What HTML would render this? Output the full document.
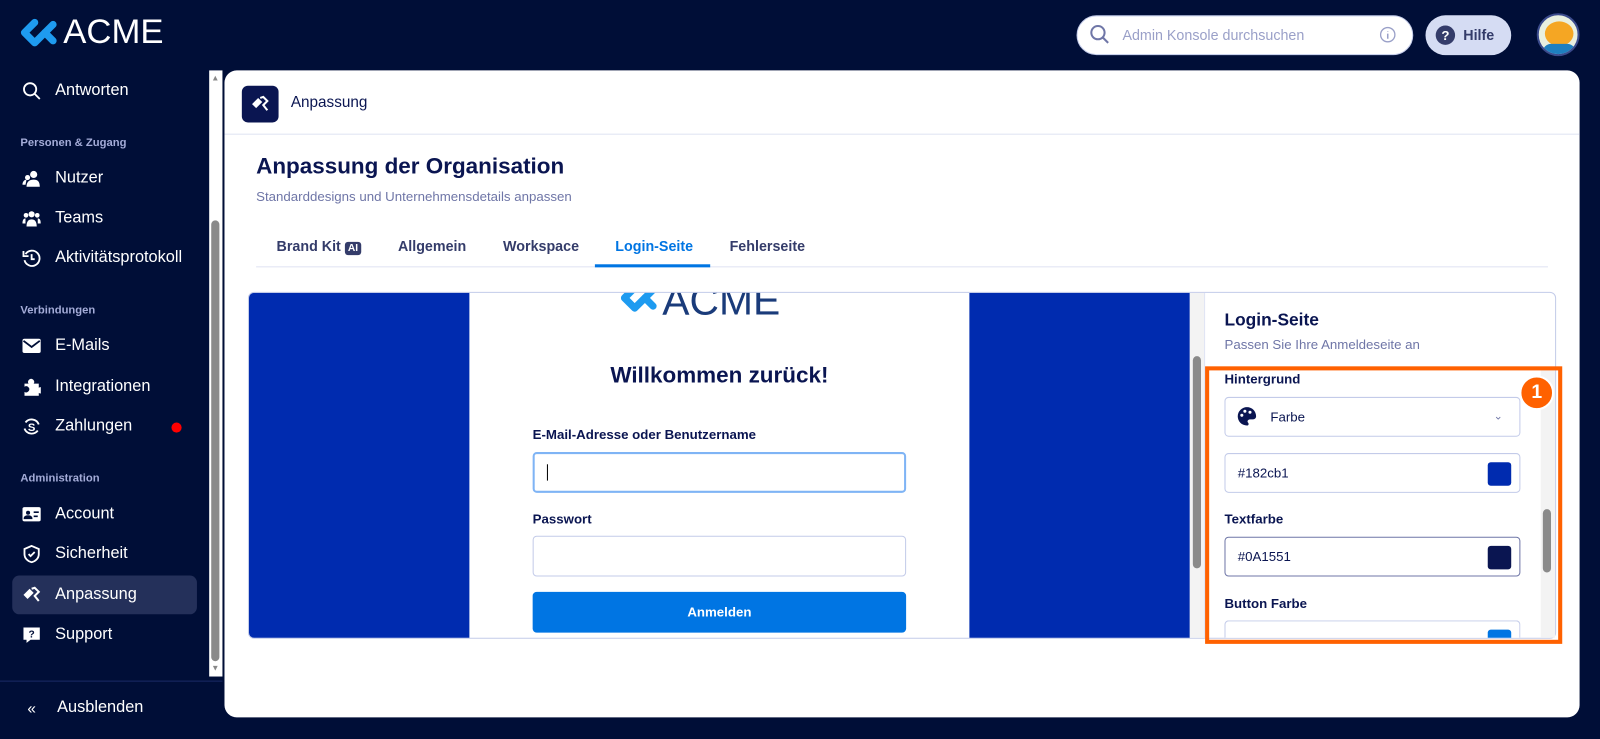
<!DOCTYPE html>
<html><head><meta charset="utf-8"><style>
*{box-sizing:border-box;margin:0;padding:0}
body{width:1600px;height:739px;background:#000e37;font-family:"Liberation Sans",sans-serif;position:relative;overflow:hidden;color:#0a1551}
#w{position:absolute;left:0;top:0;width:1568px;height:724px;transform:scale(1.0204);transform-origin:0 0}
.abs{position:absolute}
.nav{position:absolute;left:22px;color:#fff;font-size:16px;display:flex;align-items:center;gap:14px}
.nav svg{width:18px;height:18px}
.sec{position:absolute;left:20px;color:#a4acd8;font-size:11px;font-weight:bold}
.tab{position:absolute;top:233px;font-size:14px;font-weight:bold;color:#343c6a}
.lbl{position:absolute;left:1200px;font-size:13px;font-weight:bold;color:#0a1551}
.inp{position:absolute;left:1200px;width:290px;height:39px;border:1px solid #c3cbe9;border-radius:4px;background:#fff;font-size:13px;padding-left:12px;line-height:37px;color:#0a1551;overflow:hidden}
.sw{position:absolute;right:8px;top:8px;width:23px;height:23px;border-radius:3px}
</style></head><body><div id="w">
<svg class="abs" style="left:18px;top:16px" width="40" height="32" viewBox="0 0 40 32"><path d="M16 6 L6 16 L16 26 L26 16 L34 24" fill="none" stroke="#1e9bf0" stroke-width="7" stroke-linejoin="round" stroke-linecap="round"/><path d="M26 16 L34 8" stroke="#1e9bf0" stroke-width="7" stroke-linecap="round"/></svg>
<div class="abs" style="left:62px;top:12px;color:#fff;font-size:34px">ACME</div>
<div class="abs" style="left:1055px;top:15px;width:330px;height:39px;background:#fff;border-radius:20px;border:1px solid #c3cbe9"></div>
<svg class="abs" style="left:1068px;top:24px" width="20" height="20" viewBox="0 0 20 20"><circle cx="8" cy="8" r="6.5" fill="none" stroke="#6f76a7" stroke-width="2"/><path d="M13 13l5 5" stroke="#6f76a7" stroke-width="2"/></svg>
<div class="abs" style="left:1100px;top:26px;font-size:14px;color:#9aa0c8">Admin Konsole durchsuchen</div>
<svg class="abs" style="left:1352px;top:26px" width="16" height="16" viewBox="0 0 16 16"><circle cx="8" cy="8" r="7" fill="none" stroke="#9aa0c8" stroke-width="1.3"/><path d="M8 7v5M8 4.5v.5" stroke="#9aa0c8" stroke-width="1.5"/></svg>
<div class="abs" style="left:1397px;top:15px;width:84px;height:39px;background:#d5dcf3;border-radius:20px"></div>
<div class="abs" style="left:1407px;top:25px;width:19px;height:19px;border-radius:50%;background:#343c6a;color:#fff;font-size:13px;font-weight:bold;text-align:center;line-height:19px">?</div>
<div class="abs" style="left:1434px;top:26px;font-size:14px;font-weight:bold;color:#343c6a">Hilfe</div>
<div class="abs" style="left:1506px;top:13px;width:42px;height:42px;border-radius:50%;background:#e8efe0;border:2px solid #3a4a8c;overflow:hidden"><div style="position:absolute;left:6px;top:6px;width:28px;height:24px;border-radius:50%;background:#f5a623"></div><div style="position:absolute;bottom:0;left:4px;width:32px;height:10px;background:#1e7fc0;border-radius:8px 8px 0 0"></div></div>
<div class="nav" style="top:80px"><svg viewBox="0 0 18 18"><circle cx="7.5" cy="7.5" r="6" fill="none" stroke="#fff" stroke-width="1.8"/><path d="M12 12l5 5" stroke="#fff" stroke-width="1.8"/></svg>Antworten</div>
<div class="sec" style="top:134px">Personen &amp; Zugang</div>
<div class="nav" style="top:166px"><svg viewBox="0 0 18 18"><circle cx="11" cy="5" r="3.5" fill="#fff"/><circle cx="5" cy="8" r="2.5" fill="#fff"/><path d="M4 17c0-5 3-7 7-7s6 2 6 7zM0 15c0-3 2-5 4-5l-1 5z" fill="#fff"/></svg>Nutzer</div>
<div class="nav" style="top:205px"><svg viewBox="0 0 18 18"><circle cx="9" cy="5" r="3" fill="#fff"/><circle cx="3.5" cy="6" r="2.3" fill="#fff"/><circle cx="14.5" cy="6" r="2.3" fill="#fff"/><path d="M4 17c0-5 2-7 5-7s5 2 5 7zM0 14c0-3 1-5 3-5v5zM18 14c0-3-1-5-3-5v5z" fill="#fff"/></svg>Teams</div>
<div class="nav" style="top:244px"><svg viewBox="0 0 18 18"><path d="M3 5A7.5 7.5 0 1 1 2 11" fill="none" stroke="#fff" stroke-width="1.8"/><path d="M1 2v5h5" fill="none" stroke="#fff" stroke-width="1.8"/><path d="M9 5v5h3" fill="none" stroke="#fff" stroke-width="1.8"/></svg>Aktivitätsprotokoll</div>
<div class="sec" style="top:298px">Verbindungen</div>
<div class="nav" style="top:330px"><svg viewBox="0 0 18 18"><rect x="0" y="2" width="18" height="14" rx="2" fill="#fff"/><path d="M1 4l8 6 8-6" fill="none" stroke="#000e37" stroke-width="1.8"/></svg>E-Mails</div>
<div class="nav" style="top:370px"><svg viewBox="0 0 18 18"><path d="M2 6h4a3 3 0 1 1 5 0h5v4a3 3 0 1 1 0 5v3H2v-4a3 3 0 1 0 0-5z" fill="#fff"/></svg>Integrationen</div>
<div class="nav" style="top:409px"><svg viewBox="0 0 18 18"><path d="M3 5A7.5 7.5 0 0 1 16 7M15 13A7.5 7.5 0 0 1 2 11" fill="none" stroke="#fff" stroke-width="1.8"/><text x="9" y="13.5" font-size="11" font-weight="bold" fill="#fff" text-anchor="middle" font-family="Liberation Sans">S</text></svg>Zahlungen</div>
<div class="abs" style="left:168px;top:414px;width:10px;height:10px;border-radius:50%;background:#f00"></div>
<div class="sec" style="top:463px">Administration</div>
<div class="nav" style="top:495px"><svg viewBox="0 0 18 18"><rect x="0" y="2" width="18" height="14" rx="2" fill="#fff"/><circle cx="5.5" cy="7.5" r="2" fill="#000e37"/><path d="M2 13c0-3 7-3 7 0z M11 7h5M11 11h4" stroke="#000e37" stroke-width="1.6" fill="#000e37"/></svg>Account</div>
<div class="nav" style="top:534px"><svg viewBox="0 0 18 18"><path d="M9 1l7 3v5c0 4-3 7-7 8-4-1-7-4-7-8V4z" fill="none" stroke="#fff" stroke-width="1.8"/><path d="M6 9l2 2 4-4" fill="none" stroke="#fff" stroke-width="1.8"/></svg>Sicherheit</div>
<div class="abs" style="left:12px;top:564px;width:181px;height:38px;background:#24305a;border-radius:7px"></div>
<div class="nav" style="top:574px"><svg viewBox="0 0 18 18"><path d="M1 9l6-6 4 4-6 6z" fill="#fff"/><path d="M9 3l3-1 4 4-4 4 4 5" fill="none" stroke="#fff" stroke-width="2"/></svg>Anpassung</div>
<div class="nav" style="top:613px"><svg viewBox="0 0 18 18"><path d="M1 2h16v12H8l-4 3v-3H1z" fill="#fff"/><text x="9" y="12" font-size="10" font-weight="bold" fill="#000e37" text-anchor="middle" font-family="Liberation Sans">?</text></svg>Support</div>
<div class="abs" style="left:0;top:667px;width:218px;height:1px;background:#1a2a66"></div>
<div class="nav" style="top:685px;gap:16px"><span style="width:18px;text-align:center;font-size:15px">«</span>Ausblenden</div>
<div class="abs" style="left:205px;top:69px;width:13px;height:594px;background:#fff"></div>
<div class="abs" style="left:207px;top:216px;width:8px;height:432px;background:#8a8a8a;border-radius:4px"></div>
<div class="abs" style="left:207px;top:72px;font-size:8px;color:#888">▲</div>
<div class="abs" style="left:207px;top:650px;font-size:8px;color:#888">▼</div>
<div class="abs" style="left:220px;top:69px;width:1328px;height:634px;background:#fff;border-radius:12px"></div>
<div class="abs" style="left:237px;top:84px;width:36px;height:36px;background:#0a1551;border-radius:6px"><svg style="position:absolute;left:9px;top:9px" width="18" height="18" viewBox="0 0 18 18"><path d="M1 9l6-6 4 4-6 6z" fill="#fff"/><path d="M9 3l3-1 4 4-4 4 4 5" fill="none" stroke="#fff" stroke-width="2"/></svg></div>
<div class="abs" style="left:285px;top:92px;font-size:15px;color:#0a1551">Anpassung</div>
<div class="abs" style="left:220px;top:131px;width:1328px;height:1px;background:#dfe3f3"></div>
<div class="abs" style="left:251px;top:150px;font-size:22px;font-weight:bold;color:#0a1551">Anpassung der Organisation</div>
<div class="abs" style="left:251px;top:185px;font-size:13px;color:#6f76a7">Standarddesigns und Unternehmensdetails anpassen</div>
<div class="tab" style="left:271px">Brand Kit <span style="background:#343c6a;color:#fff;font-size:10px;padding:1px 3px;border-radius:3px">AI</span></div>
<div class="tab" style="left:390px">Allgemein</div>
<div class="tab" style="left:493px">Workspace</div>
<div class="tab" style="left:603px;color:#0075e3">Login-Seite</div>
<div class="tab" style="left:715px">Fehlerseite</div>
<div class="abs" style="left:251px;top:261px;width:1266px;height:1px;background:#dfe3f3"></div>
<div class="abs" style="left:583px;top:259px;width:113px;height:3px;background:#0075e3"></div>
<div class="abs" style="left:243px;top:286px;width:1282px;height:340px;border:1px solid #c3cbe9;border-radius:6px;overflow:hidden;background:#fff">
 <div class="abs" style="left:0;top:0;width:216px;height:340px;background:#002baf"></div>
 <div class="abs" style="left:706px;top:0;width:216px;height:340px;background:#002baf"></div>
 <svg class="abs" style="left:362px;top:-12px" width="40" height="34" viewBox="0 0 40 32"><path d="M16 6 L6 16 L16 26 L26 16 L34 24" fill="none" stroke="#1e9bf0" stroke-width="7" stroke-linejoin="round" stroke-linecap="round"/><path d="M26 16 L34 8" stroke="#1e9bf0" stroke-width="7" stroke-linecap="round"/></svg>
 <div class="abs" style="left:405px;top:-14px;font-size:40px;color:#1a3b7a">ACME</div>
 <div class="abs" style="left:216px;top:68px;width:490px;text-align:center;font-size:22px;font-weight:bold;color:#0a1551">Willkommen zurück!</div>
 <div class="abs" style="left:278px;top:131px;font-size:13px;font-weight:bold;color:#0a1551">E-Mail-Adresse oder Benutzername</div>
 <div class="abs" style="left:278px;top:156px;width:366px;height:40px;border:2px solid #7fb4f5;border-radius:4px"><div style="position:absolute;left:12px;top:10px;width:1px;height:16px;background:#000"></div></div>
 <div class="abs" style="left:278px;top:214px;font-size:13px;font-weight:bold;color:#0a1551">Passwort</div>
 <div class="abs" style="left:278px;top:238px;width:366px;height:40px;border:1px solid #c3cbe9;border-radius:4px"></div>
 <div class="abs" style="left:278px;top:293px;width:366px;height:40px;background:#0075e3;border-radius:4px;color:#fff;font-size:13px;font-weight:bold;text-align:center;line-height:40px">Anmelden</div>
 <div class="abs" style="left:922px;top:0;width:14px;height:340px;background:#f3f3f3"></div>
 <div class="abs" style="left:925px;top:62px;width:8px;height:208px;background:#8a8a8a;border-radius:4px"></div>
 <div class="abs" style="left:936px;top:0;width:1px;height:340px;background:#dfe3f3"></div>
</div>
<div class="abs" style="left:1200px;top:304px;font-size:17px;font-weight:bold;color:#0a1551">Login-Seite</div>
<div class="abs" style="left:1200px;top:330px;font-size:13px;color:#6f76a7">Passen Sie Ihre Anmeldeseite an</div>
<div class="lbl" style="top:364px">Hintergrund</div>
<div class="inp" style="top:389px;padding-left:44px">Farbe<span style="position:absolute;right:16px;top:0;font-size:11px;color:#6f76a7">⌄</span></div>
<svg class="abs" style="left:1212px;top:398px" width="20" height="20" viewBox="0 0 20 20"><path d="M10 1a9 9 0 0 0 0 18c2 0 2-2 1-3s0-3 2-3h3a3 3 0 0 0 3-3c0-5-4-9-9-9z" fill="#0a1551"/><circle cx="5" cy="9" r="1.5" fill="#fff"/><circle cx="8" cy="5" r="1.5" fill="#fff"/><circle cx="13" cy="6" r="1.5" fill="#fff"/></svg>
<div class="inp" style="top:444px">#182cb1<div class="sw" style="background:#002baf"></div></div>
<div class="lbl" style="top:501px">Textfarbe</div>
<div class="inp" style="top:526px;border-color:#6f76a7">#0A1551<div class="sw" style="background:#0a1551"></div></div>
<div class="lbl" style="top:584px">Button Farbe</div>
<div class="inp" style="top:608px;height:17px;border-bottom:none;border-radius:4px 4px 0 0"><div class="sw" style="background:#0075e3"></div></div>
<div class="abs" style="left:1510px;top:360px;width:14px;height:265px;background:#f3f3f3"></div>
<div class="abs" style="left:1512px;top:499px;width:8px;height:62px;background:#8a8a8a;border-radius:4px"></div>
<div class="abs" style="left:1181px;top:359px;width:350px;height:272px;border:4px solid #ff6100"></div>
<div class="abs" style="left:1489px;top:368px;width:34px;height:34px;border-radius:50%;background:#ff6100;border:2px solid #fff;color:#fff;font-size:19px;font-weight:bold;text-align:center;line-height:30px">1</div>
</div></body></html>
